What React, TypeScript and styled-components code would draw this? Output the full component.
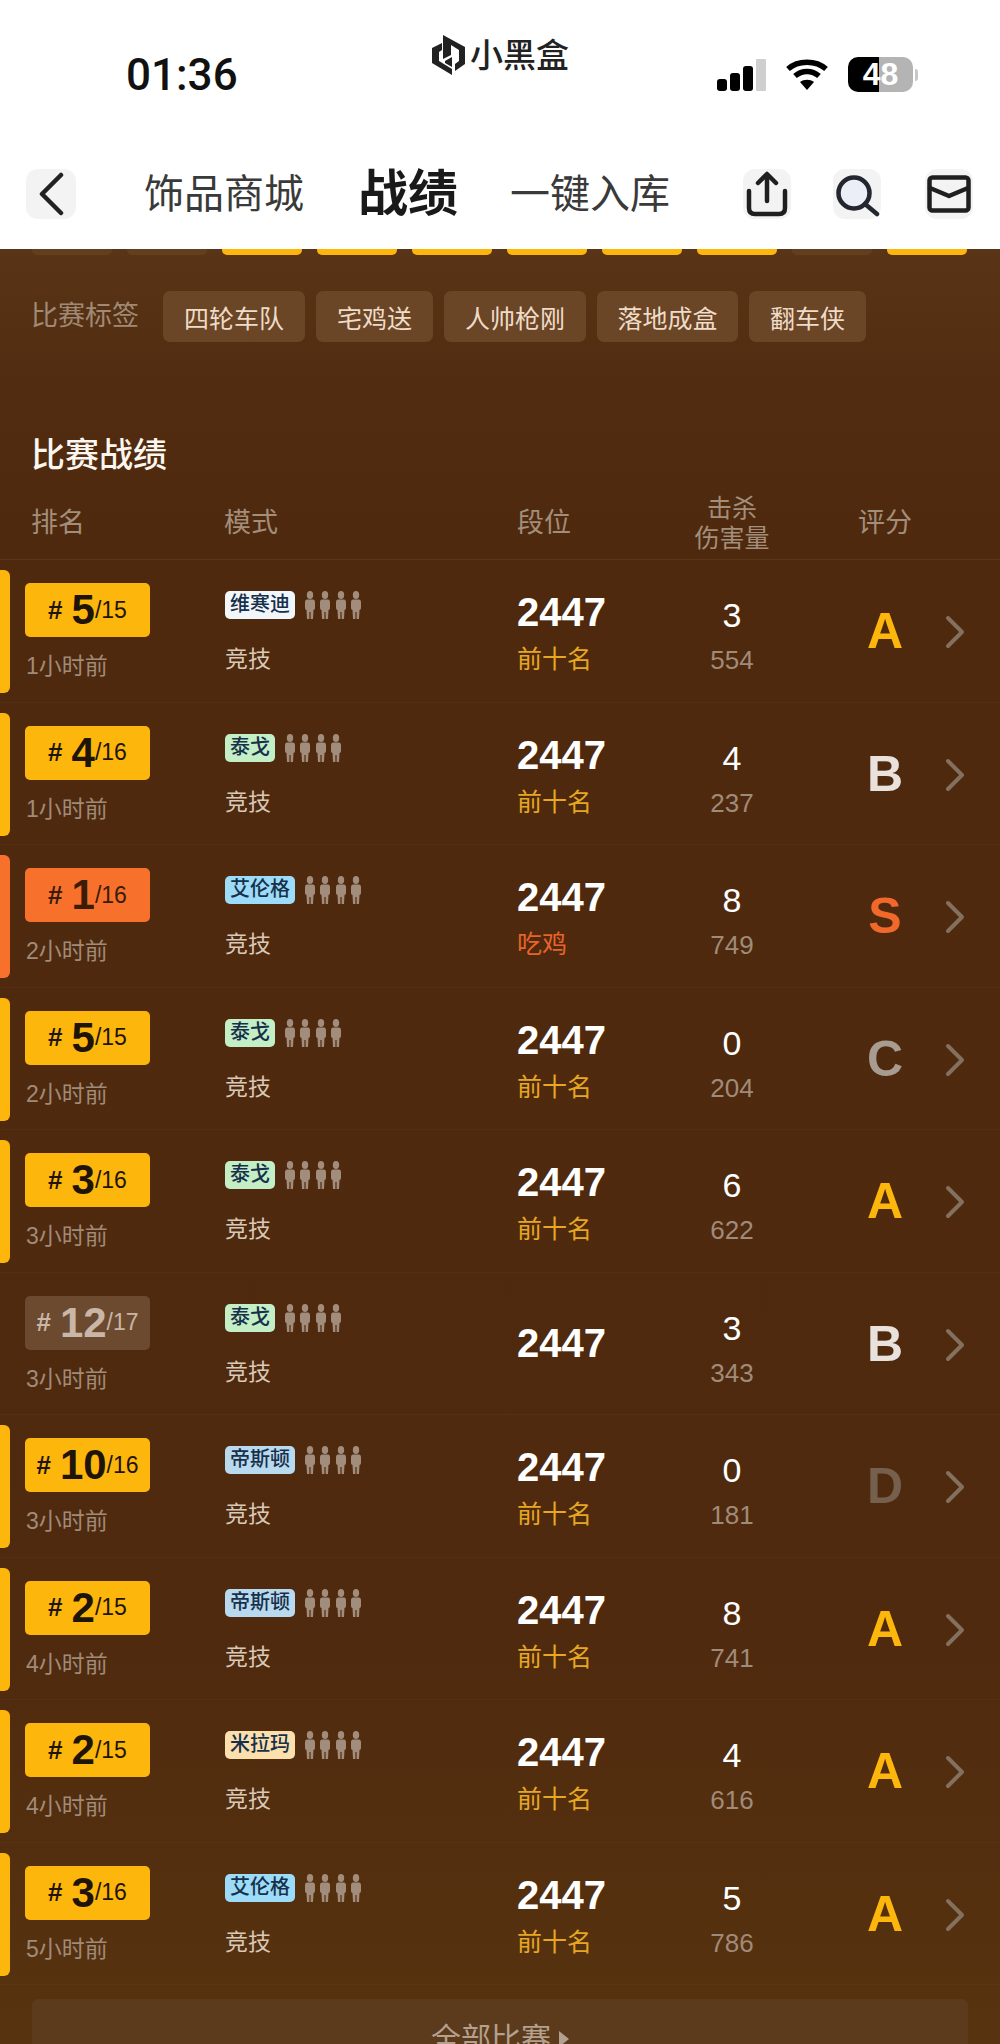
import React from 'react'
import styled, { createGlobalStyle } from 'styled-components'

const GlobalStyle = createGlobalStyle`
  html, body {
    margin: 0;
    padding: 0;
    background: #fff;
  }
  body {
    font-family: "Liberation Sans", "Noto Sans CJK SC", sans-serif;
  }
`

const Page = styled.div`
  width: 1000px;
  height: 2044px;
  overflow: hidden;
`

const TopArea = styled.header`
  height: 249px;
  background: #fff;
`

const StatusBar = styled.div`
  height: 148px;
  display: flex;
  align-items: flex-start;
  padding-left: 126px;
`

const Clock = styled.div`
  width: 306px;
  margin-top: 50px;
  font-family: Roboto, "Liberation Sans", sans-serif;
  font-size: 44px;
  line-height: 50px;
  font-weight: 500;
  color: #111;
`

const Logo = styled.div`
  width: 285px;
  margin-top: 35px;
  display: flex;
  align-items: center;
  gap: 5px;
`

const LogoText = styled.span`
  font-size: 33px;
  line-height: 40px;
  font-weight: 500;
  color: #222;
`

const StatusIcons = styled.div`
  display: flex;
  align-items: center;
  margin-top: 57px;
`

const Signal = styled.div`
  width: 49px;
  height: 33px;
  display: flex;
  align-items: flex-end;
  gap: 3.5px;
`

const SignalBar = styled.i<{ $h: number; $off?: boolean }>`
  display: block;
  width: 9.500px;
  height: ${(p) => p.$h}px;
  border-radius: ${(p) => (p.$off ? 1 : 3)}px;
  background: ${(p) => (p.$off ? '#cfcfcf' : '#000')};
`

const Wifi = styled.svg`
  width: 44px;
  height: 33px;
  margin-left: 19px;
`

const Battery = styled.div`
  width: 65px;
  height: 35px;
  margin-left: 19px;
  border-radius: 10px;
  overflow: hidden;
  background: linear-gradient(90deg, #000 0 31px, #b4b4b4 31px);
  color: #fff;
  font-size: 32px;
  line-height: 35px;
  font-weight: 700;
  text-align: center;
`

const BatteryTip = styled.i`
  display: block;
  width: 3px;
  height: 12px;
  margin-left: 2px;
  border-radius: 0 3px 3px 0;
  background: #c8c8c8;
`

const NavBar = styled.nav`
  height: 92px;
  display: flex;
  align-items: center;
  padding-left: 26px;
`

const IconButton = styled.div<{ $left: number; $width: number }>`
  width: ${(p) => p.$width}px;
  height: 50px;
  margin-left: ${(p) => p.$left}px;
  display: flex;
  align-items: center;
  justify-content: center;
  border-radius: 12px;
  background: #f3f3f3;
`

const Tab = styled.div<{ $left: number; $active?: boolean }>`
  margin-left: ${(p) => p.$left}px;
  font-size: ${(p) => (p.$active ? 50 : 40)}px;
  line-height: 56px;
  font-weight: ${(p) => (p.$active ? 700 : 400)};
  color: ${(p) => (p.$active ? '#1a1a1a' : '#3a3a3a')};
  white-space: nowrap;
`

const Content = styled.main`
  height: 1795px;
  background: linear-gradient(180deg, #5a3416 0, #522c10 140px, #4e290d 300px, #4f2a0e 1400px, #58330f 1795px);
`

const StripRow = styled.div`
  height: 42px;
  display: flex;
  gap: 15px;
  padding-left: 32px;
`

const Strip = styled.i<{ $on: boolean }>`
  display: block;
  width: 80px;
  height: 6px;
  border-radius: 0 0 5px 5px;
  background: ${(p) => (p.$on ? '#fdb60c' : '#62401f')};
`

const TagRow = styled.div`
  display: flex;
  align-items: center;
  padding-left: 31px;
`

const TagLabel = styled.span`
  width: 132px;
  font-size: 27px;
  line-height: 51px;
  color: #a08a76;
`

const Tag = styled.span<{ $width: number }>`
  width: ${(p) => p.$width}px;
  height: 51px;
  margin-right: 11px;
  display: flex;
  align-items: center;
  justify-content: center;
  border-radius: 7px;
  background: #6a4526;
  color: #eedcc8;
  font-size: 25px;
`

const SectionTitle = styled.h2`
  margin: 89px 0 0 31px;
  font-size: 34px;
  line-height: 48px;
  font-weight: 500;
  color: #fbf6ef;
`

const HeadRow = styled.div`
  height: 81px;
  box-sizing: border-box;
  padding-top: 2px;
  display: grid;
  grid-template-columns: 224px 293px 155px 120px 1fr;
  align-items: center;
  border-bottom: 1px solid #5a361a;
  font-size: 27px;
  color: #a38e7b;
`

const HeadCell = styled.div<{ $left?: number }>`
  padding-left: ${(p) => p.$left ?? 0}px;
`

const HeadStack = styled.div`
  margin-top: 5px;
  font-size: 25px;
  line-height: 30px;
  text-align: center;
`

const MatchRow = styled.div`
  height: 142.5px;
  box-sizing: border-box;
  display: grid;
  grid-template-columns: 25px 200px 292px 155px 120px 1fr;
  border-bottom: 1px solid rgba(255, 255, 255, 0.025);
`

const SideBar = styled.div<{ $color?: string }>`
  width: 10px;
  height: 123px;
  margin-top: 10px;
  border-radius: 0 6px 6px 0;
  background: ${(p) => p.$color ?? 'transparent'};
`

const RankCell = styled.div`
  padding-top: 23px;
`

const RankBadge = styled.div<{ $bg: string; $color: string }>`
  width: 125px;
  height: 54px;
  display: flex;
  align-items: center;
  justify-content: center;
  border-radius: 5px;
  background: ${(p) => p.$bg};
  color: ${(p) => p.$color};
`

const RankHash = styled.span`
  margin-right: 9px;
  font-size: 26px;
  font-weight: 700;
`

const RankNum = styled.span`
  font-size: 42px;
  font-weight: 700;
`

const RankTotal = styled.span`
  font-size: 23px;
`

const TimeText = styled.div`
  margin: 13px 0 0 1px;
  font-size: 23px;
  line-height: 32px;
  color: #a08b79;
`

const ModeCell = styled.div`
  padding-top: 31px;
`

const MapLine = styled.div`
  display: flex;
  align-items: center;
  gap: 10px;
  height: 28px;
`

const MapPill = styled.span<{ $bg: string }>`
  height: 28px;
  padding: 0 5px;
  display: block;
  border-radius: 5px;
  background: ${(p) => p.$bg};
  color: #17304a;
  font-size: 20px;
  line-height: 27px;
  font-weight: 500;
`

const People = styled.div`
  display: flex;
  gap: 5.3px;
`

const ModeText = styled.div`
  margin-top: 24px;
  font-size: 23px;
  line-height: 32px;
  color: #d9c9b8;
`

const TierCell = styled.div<{ $solo: boolean }>`
  padding-top: ${(p) => (p.$solo ? 47 : 29)}px;
`

const Score = styled.div`
  font-size: 40px;
  line-height: 46px;
  font-weight: 700;
  color: #fff;
`

const Placement = styled.div<{ $win: boolean }>`
  margin-top: 7px;
  font-size: 25px;
  line-height: 34px;
  color: ${(p) => (p.$win ? '#e8642a' : '#e6a722')};
`

const KillCell = styled.div`
  padding-top: 35px;
  text-align: center;
`

const Kills = styled.div`
  font-size: 34px;
  line-height: 40px;
  font-weight: 500;
  color: #fff;
`

const Damage = styled.div`
  margin-top: 8px;
  font-size: 26px;
  line-height: 34px;
  color: #a08b79;
`

const GradeCell = styled.div`
  height: 123px;
  padding: 45px 0 0 60px;
  display: flex;
  align-items: flex-start;
`

const Grade = styled.div<{ $color: string }>`
  width: 66px;
  font-size: 50px;
  line-height: 52px;
  font-weight: 700;
  text-align: center;
  color: ${(p) => p.$color};
`

const Arrow = styled.svg`
  width: 20px;
  height: 34px;
  margin: 10px 0 0 27px;
`

const AllButton = styled.div`
  height: 80px;
  margin: 14px 32px 0;
  display: flex;
  justify-content: center;
  align-items: center;
  gap: 8px;
  background: #5c3a1c;
  border-radius: 6px 6px 0 0;
  color: #b3a08e;
  font-size: 30px;
  line-height: 40px;
`

const Triangle = styled.i`
  display: block;
  width: 0;
  height: 0;
  border-left: 10px solid #b3a08e;
  border-top: 8px solid transparent;
  border-bottom: 8px solid transparent;
`

const stripOn = [false, false, true, true, true, true, true, true, false, true]
const tags = [
  ['四轮车队', 142],
  ['宅鸡送', 117],
  ['人帅枪刚', 142],
  ['落地成盒', 141],
  ['翻车侠', 117],
] as const

const mapColor: Record<string, string> = {
  维寒迪: '#f1f6fb',
  泰戈: '#c4eec6',
  艾伦格: '#9cdcf8',
  帝斯顿: '#b9d9ee',
  米拉玛: '#fbe0ae',
}

const gradeColor: Record<string, string> = {
  A: '#fdb60c',
  B: '#e9e2dc',
  S: '#f0682a',
  C: '#a89b90',
  D: '#75604e',
}

const matches = [
  { rank: 5, total: 15, time: '1小时前', map: '维寒迪', kills: 3, dmg: 554, grade: 'A' },
  { rank: 4, total: 16, time: '1小时前', map: '泰戈', kills: 4, dmg: 237, grade: 'B' },
  { rank: 1, total: 16, time: '2小时前', map: '艾伦格', kills: 8, dmg: 749, grade: 'S' },
  { rank: 5, total: 15, time: '2小时前', map: '泰戈', kills: 0, dmg: 204, grade: 'C' },
  { rank: 3, total: 16, time: '3小时前', map: '泰戈', kills: 6, dmg: 622, grade: 'A' },
  { rank: 12, total: 17, time: '3小时前', map: '泰戈', kills: 3, dmg: 343, grade: 'B' },
  { rank: 10, total: 16, time: '3小时前', map: '帝斯顿', kills: 0, dmg: 181, grade: 'D' },
  { rank: 2, total: 15, time: '4小时前', map: '帝斯顿', kills: 8, dmg: 741, grade: 'A' },
  { rank: 2, total: 15, time: '4小时前', map: '米拉玛', kills: 4, dmg: 616, grade: 'A' },
  { rank: 3, total: 16, time: '5小时前', map: '艾伦格', kills: 5, dmg: 786, grade: 'A' },
]

const Person = () => (
  <svg width="10" height="28" viewBox="0 0 10 28" fill="#a28d7d">
    <ellipse cx="5" cy="4" rx="3.200" ry="4" />
    <path d="M2 8.500h6c1.200 0 2 1 2 3v5c0 1.500-.5 2.500-1.500 2.500L8 28H5.600v-7H4.400v7H2l-.5-9C.5 19 0 18 0 16.500v-5c0-2 .8-3 2-3z" />
  </svg>
)

const LogoMark = () => (
  <svg width="33" height="41" viewBox="0 0 33 41" fill="#222">
    <path d="M0 13 10 8v7l-3 2v9l13 8v6L0 28z" />
    <path d="M11 0 33 12v17l-10 7v-7l4-3V15l-8-5v10l-8 4z" />
    <path d="M13 26l7-4v10l-7-4z" />
  </svg>
)

const matchBadge = (rank: number) => {
  if (rank === 1) return { bg: '#f7712c', color: '#3a1c08', bar: '#f7712c' }
  if (rank > 10) return { bg: '#6b4a30', color: '#c9b6a6', bar: undefined }
  return { bg: '#fdb60c', color: '#1e1508', bar: '#fdb60c' }
}

const App = () => (
  <Page>
    <GlobalStyle />
    <TopArea>
      <StatusBar>
        <Clock>01:36</Clock>
        <Logo>
          <LogoMark />
          <LogoText>小黑盒</LogoText>
        </Logo>
        <StatusIcons>
          <Signal>
            <SignalBar $h={12} />
            <SignalBar $h={18} />
            <SignalBar $h={25} />
            <SignalBar $h={32} $off />
          </Signal>
          <Wifi viewBox="0 0 44 33" fill="none" stroke="#000" strokeWidth="5.500">
            <path d="M3 11C13 2 31 2 41 11" />
            <path d="M10 18C17 12 27 12 34 18" />
            <path d="M22 32l-7-8c4-3 10-3 14 0z" fill="#000" stroke="none" />
          </Wifi>
          <Battery>48</Battery>
          <BatteryTip />
        </StatusIcons>
      </StatusBar>
      <NavBar>
        <IconButton $left={0} $width={50}>
          <svg width="28" height="44" viewBox="0 0 28 44" fill="none" stroke="#222" strokeWidth="4.500" strokeLinecap="round" strokeLinejoin="round">
            <path d="M24 3 5 22l19 19" />
          </svg>
        </IconButton>
        <Tab $left={68}>饰品商城</Tab>
        <Tab $left={54} $active>战绩</Tab>
        <Tab $left={52}>一键入库</Tab>
        <IconButton $left={73} $width={48}>
          <svg width="42" height="46" viewBox="0 0 42 46" fill="none" stroke="#1f1f1f" strokeWidth="4.500" strokeLinecap="round" strokeLinejoin="round">
            <path d="M3 20v17c0 4 2 6 6 6h24c4 0 6-2 6-6V20" />
            <path d="M21 30V4M12 12l9-9 9 9" />
          </svg>
        </IconButton>
        <IconButton $left={42} $width={48}>
          <svg width="46" height="46" viewBox="0 0 46 46" fill="none" stroke="#23262e" strokeWidth="4.500" strokeLinecap="round">
            <circle cx="20" cy="22" r="15.500" fill="#eceef5" />
            <path d="M31 33l12 10" />
          </svg>
        </IconButton>
        <IconButton $left={44} $width={48}>
          <svg width="44" height="38" viewBox="0 0 44 38" fill="none" stroke="#1f1f1f" strokeWidth="4.500" strokeLinecap="round" strokeLinejoin="round">
            <rect x="2.500" y="2.500" width="39" height="33" rx="3" />
            <path d="M3 13l19 8 19-8" />
          </svg>
        </IconButton>
      </NavBar>
    </TopArea>
    <Content>
      <StripRow>
        {stripOn.map((on, i) => (
          <Strip key={i} $on={on} />
        ))}
      </StripRow>
      <TagRow>
        <TagLabel>比赛标签</TagLabel>
        {tags.map(([name, width]) => (
          <Tag key={name} $width={width}>
            {name}
          </Tag>
        ))}
      </TagRow>
      <SectionTitle>比赛战绩</SectionTitle>
      <HeadRow>
        <HeadCell $left={31}>排名</HeadCell>
        <HeadCell>模式</HeadCell>
        <HeadCell>段位</HeadCell>
        <HeadStack>
          击杀
          <br />
          伤害量
        </HeadStack>
        <HeadCell $left={66}>评分</HeadCell>
      </HeadRow>
      {matches.map((m, i) => {
        const badge = matchBadge(m.rank)
        const solo = m.rank > 10
        return (
          <MatchRow key={i}>
            <SideBar $color={badge.bar} />
            <RankCell>
              <RankBadge $bg={badge.bg} $color={badge.color}>
                <RankHash>#</RankHash>
                <RankNum>{m.rank}</RankNum>
                <RankTotal>/{m.total}</RankTotal>
              </RankBadge>
              <TimeText>{m.time}</TimeText>
            </RankCell>
            <ModeCell>
              <MapLine>
                <MapPill $bg={mapColor[m.map]}>{m.map}</MapPill>
                <People>
                  <Person />
                  <Person />
                  <Person />
                  <Person />
                </People>
              </MapLine>
              <ModeText>竞技</ModeText>
            </ModeCell>
            <TierCell $solo={solo}>
              <Score>2447</Score>
              {!solo && <Placement $win={m.rank === 1}>{m.rank === 1 ? '吃鸡' : '前十名'}</Placement>}
            </TierCell>
            <KillCell>
              <Kills>{m.kills}</Kills>
              <Damage>{m.dmg}</Damage>
            </KillCell>
            <GradeCell>
              <Grade $color={gradeColor[m.grade]}>{m.grade}</Grade>
              <Arrow viewBox="0 0 20 34" fill="none" stroke="#84705f" strokeWidth="4" strokeLinecap="round" strokeLinejoin="round">
                <path d="M3 3l14 14L3 31" />
              </Arrow>
            </GradeCell>
          </MatchRow>
        )
      })}
      <AllButton>
        全部比赛
        <Triangle />
      </AllButton>
    </Content>
  </Page>
)

export default App
